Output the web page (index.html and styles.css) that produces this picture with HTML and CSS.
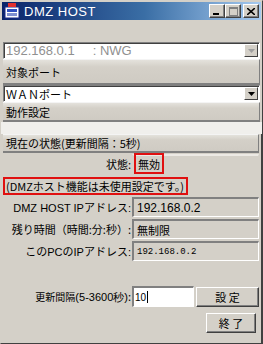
FILE: index.html
```html
<!DOCTYPE html>
<html lang="ja">
<head>
<meta charset="UTF-8">
<title>DMZ HOST</title>
<link rel="stylesheet" href="styles.css">
</head>
<body>
<div class="window">
  <div class="titlebar">
    <svg class="app-icon" width="16" height="16" viewBox="0 0 16 16">
      <rect x="1" y="4" width="14" height="11" fill="#fff" stroke="#1a2a8a"/>
      <rect x="3" y="6" width="10" height="3" fill="#3050c0"/>
      <rect x="3" y="10" width="10" height="3" fill="#8090d0"/>
      <rect x="4" y="0" width="8" height="4" fill="#e03030"/>
    </svg>
    <span class="title">DMZ HOST</span>
    <div class="caption-buttons">
      <span class="cap-btn"><svg width="8" height="7" viewBox="0 0 8 7"><rect x="0" y="5" width="6" height="2" fill="#000"/></svg></span>
      <span class="cap-btn disabled"><svg width="9" height="9" viewBox="0 0 9 9"><rect x="0.5" y="0.5" width="8" height="8" fill="none" stroke="#808080"/><rect x="0" y="0" width="9" height="2" fill="#808080"/></svg></span>
      <span class="cap-btn close"><svg width="8" height="7" viewBox="0 0 8 7"><path d="M0 0 L8 7 M8 0 L0 7" stroke="#000" stroke-width="1.6"/></svg></span>
    </div>
  </div>

  <div class="top-section">
    <div class="combo disabled">
      <span class="combo-text">192.168.0.1&nbsp;&nbsp;&nbsp;&nbsp;&nbsp;: NWG</span>
      <span class="combo-arrow"><svg width="7" height="4" viewBox="0 0 7 4"><path d="M0 0 H7 L3.5 4 Z" fill="#a0a0a0"/></svg></span>
    </div>
    <div class="label-panel tall">対象ポート</div>
    <div class="combo">
      <span class="combo-text jp">ＷＡＮポート</span>
      <span class="combo-arrow"><svg width="7" height="4" viewBox="0 0 7 4"><path d="M0 0 H7 L3.5 4 Z" fill="#000"/></svg></span>
    </div>
    <div class="label-panel">動作設定</div>
  </div>

  <div class="gap"></div>

  <div class="status-section">
    <div class="label-panel">現在の状態(更新間隔：5秒)</div>
    <div class="row state-row">
      <span class="row-label">状態:</span>
      <div class="field state-field"><span class="red-box">無効</span></div>
    </div>
    <div class="notice">(DMZホスト機能は未使用設定です。)</div>
    <div class="row">
      <span class="row-label latin">DMZ HOST IPアドレス:</span>
      <div class="field">192.168.0.2</div>
    </div>
    <div class="row">
      <span class="row-label">残り時間（時間:分:秒）:</span>
      <div class="field jp">無制限</div>
    </div>
    <div class="row">
      <span class="row-label latin">このPCのIPアドレス:</span>
      <div class="field mono">192.168.0.2</div>
    </div>

    <div class="interval-row">
      <span class="row-label"><span class="narrow">更新間隔</span><span class="small">(5-3600秒)</span>:</span>
      <div class="text-input">10<span class="caret"></span></div>
      <button class="btn set">設 定</button>
    </div>
    <div class="close-row">
      <button class="btn">終 了</button>
    </div>
  </div>
</div>
</body>
</html>
```

FILE: styles.css
```css
body {
  margin: 0;
  background-color: #d4d0c8;
  font-family: "Noto Sans CJK JP", "Liberation Sans", sans-serif;
  font-size: 11px;
  color: #000;
}
.window {
  width: 263px;
  height: 344px;
  box-sizing: border-box;
  border-top: 1px solid #d4d0c8;
  border-left: 1px solid #d4d0c8;
  border-right: 1px solid #404040;
  border-bottom: 1px solid #404040;
  background-color: #d4d0c8;
  display: flex;
  flex-direction: column;
}
.titlebar {
  height: 18px;
  margin: 1px 1px 0 1px;
  background: linear-gradient(to right, #0a246a, #3a6ea5 55%, #a6caf0);
  display: flex;
  align-items: center;
  padding-left: 2px;
  color: #fff;
}
.app-icon {
  margin-right: 4px;
}
.title {
  font-family: "Liberation Sans", sans-serif;
  font-size: 13px;
  letter-spacing: 0.5px;
  flex: 1;
}
.caption-buttons {
  display: flex;
  margin-right: 2px;
}
.cap-btn {
  width: 16px;
  height: 14px;
  box-sizing: border-box;
  background-color: #d4d0c8;
  border-top: 1px solid #fff;
  border-left: 1px solid #fff;
  border-right: 1px solid #404040;
  border-bottom: 1px solid #404040;
  box-shadow: inset -1px -1px 0 #808080;
  display: flex;
  align-items: center;
  justify-content: center;
}
.cap-btn.close {
  margin-left: 2px;
}
.top-section {
  padding: 22px 2px 0 2px;
}
.combo {
  height: 17px;
  box-sizing: border-box;
  background-color: #fff;
  border-top: 1px solid #808080;
  border-left: 1px solid #808080;
  border-right: 1px solid #fff;
  border-bottom: 1px solid #fff;
  box-shadow: inset 1px 1px 0 #404040;
  display: flex;
  align-items: center;
  font-family: "Liberation Sans", sans-serif;
  font-size: 13px;
}
.combo.disabled {
  color: #909090;
}
.combo-text {
  flex: 1;
  padding-left: 2px;
  white-space: nowrap;
}
.combo-text.jp {
  font-family: "Noto Sans CJK JP", sans-serif;
  font-size: 11px;
}
.combo-arrow {
  width: 14px;
  height: 13px;
  box-sizing: border-box;
  margin-right: 1px;
  background-color: #d4d0c8;
  border-top: 1px solid #fff;
  border-left: 1px solid #fff;
  border-right: 1px solid #404040;
  border-bottom: 1px solid #404040;
  display: flex;
  align-items: center;
  justify-content: center;
}
.label-panel {
  height: 20px;
  box-sizing: border-box;
  padding-left: 3px;
  display: flex;
  align-items: center;
  background: linear-gradient(#e4e2dc, #d4d0c8 30%, #cfcbc3);
  border-top: 1px solid #f4f4f4;
  border-bottom: 2px solid #808080;
  border-right: 1px solid #808080;
}
.label-panel.tall {
  height: 26px;
}
.gap {
  height: 12px;
  background-color: #f0efec;
}
.status-section {
  flex: 1;
  padding: 0 2px;
  border-right: 1px solid #404040;
  display: flex;
  flex-direction: column;
}
.status-section .label-panel {
  height: 19px;
}
.row {
  display: flex;
  align-items: center;
  margin-top: 2px;
}
.state-row {
  margin-top: 1px;
}
.row-label {
  width: 128px;
  flex-shrink: 0;
  text-align: right;
  white-space: nowrap;
  padding-right: 1px;
}
.row-label.latin {
  font-family: "Liberation Sans", "Noto Sans CJK JP", sans-serif;
}
.field {
  flex: 1;
  height: 20px;
  box-sizing: border-box;
  padding-left: 3px;
  display: flex;
  align-items: center;
  border-top: 2px solid #808080;
  border-left: 2px solid #808080;
  border-right: 1px solid #fff;
  border-bottom: 1px solid #fff;
  font-family: "Liberation Sans", "Noto Sans CJK JP", sans-serif;
  font-size: 12px;
}
.field.jp {
  font-family: "Noto Sans CJK JP", sans-serif;
  font-size: 11px;
}
.field.mono {
  font-family: "Liberation Mono", monospace;
  font-size: 9px;
}
.state-field {
  border-color: #ece9e4 transparent transparent transparent;
  padding-left: 0;
  font-family: "Noto Sans CJK JP", sans-serif;
  font-size: 11px;
}
.red-box {
  height: 21px;
  box-sizing: border-box;
  margin-top: -2px;
  border: 2px solid #e01010;
  padding: 0 2px;
  display: flex;
  align-items: center;
}
.notice {
  align-self: flex-start;
  border: 2px solid #e01010;
  padding: 0 2px 0 1px;
  line-height: 14px;
  margin-top: 3px;
}
.interval-row {
  display: flex;
  align-items: center;
  margin-top: 25px;
}
.narrow {
  font-size: 10px;
}
.small {
  font-family: "Liberation Sans", sans-serif;
  font-size: 11px;
}
.text-input {
  width: 62px;
  height: 21px;
  box-sizing: border-box;
  background-color: #fff;
  border-top: 2px solid #808080;
  border-left: 2px solid #808080;
  border-right: 1px solid #fff;
  border-bottom: 1px solid #fff;
  font-family: "Liberation Sans", sans-serif;
  font-size: 10px;
  padding-left: 1px;
  display: flex;
  align-items: center;
}
.caret {
  width: 1px;
  height: 12px;
  background-color: #000;
  margin-left: 1px;
}
.btn {
  font-family: "Noto Sans CJK JP", sans-serif;
  font-size: 11px;
  height: 20px;
  box-sizing: border-box;
  background-color: #d4d0c8;
  border-top: 1px solid #fff;
  border-left: 1px solid #fff;
  border-right: 1px solid #404040;
  border-bottom: 1px solid #404040;
  box-shadow: inset -1px -1px 0 #808080;
  padding: 0;
  margin-left: 2px;
}
.btn.set {
  flex: 1;
}
.close-row {
  display: flex;
  justify-content: flex-end;
  margin-top: 6px;
  padding-right: 3px;
}
.close-row .btn {
  width: 50px;
}
```
